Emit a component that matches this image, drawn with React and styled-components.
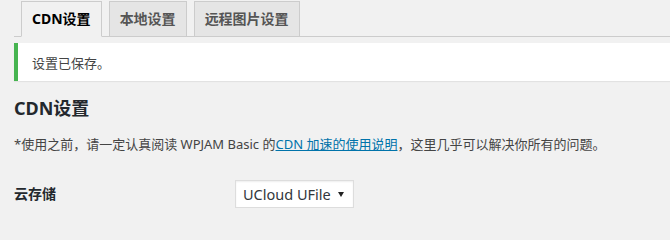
import styled, { createGlobalStyle } from 'styled-components';

const GlobalStyle = createGlobalStyle`
  html, body {
    margin: 0;
    padding: 0;
    background: #f1f1f1;
  }
  body {
    font-family: "Noto Sans", "Noto Sans CJK SC", sans-serif;
    color: #444;
    font-size: 13px;
  }
`;

const Wrap = styled.div`
  padding-left: 14px;
  width: 670px;
  height: 236px;
  box-sizing: border-box;
  overflow: hidden;
`;

const TabBar = styled.nav`
  display: flex;
  align-items: flex-end;
  gap: 7px;
  padding: 1px 0 0 7px;
  border-bottom: 1px solid #ccc;
`;

const Tab = styled.a`
  display: block;
  padding: 5px 10px;
  margin-bottom: -1px;
  font-size: 14px;
  line-height: 24px;
  font-weight: 700;
  text-decoration: none;
  border: 1px solid #ccc;
  border-bottom-color: ${props => (props.active ? '#f1f1f1' : '#ccc')};
  background: ${props => (props.active ? '#f1f1f1' : '#e5e5e5')};
  color: ${props => (props.active ? '#000' : '#555')};
`;

const Notice = styled.div`
  margin-top: 6px;
  height: 38px;
  display: flex;
  align-items: center;
  padding-left: 14px;
  background: #fff;
  border-left: 4px solid #46b450;
  box-shadow: 0 1px 1px rgba(0, 0, 0, 0.06);
  font-size: 13px;
  color: #444;
`;

const Title = styled.h2`
  margin: 15px 0 0;
  font-size: 18px;
  line-height: 24px;
  font-weight: 700;
  color: #23282d;
`;

const Intro = styled.p`
  margin: 14px 0 0;
  font-size: 13px;
  line-height: 20px;
  color: #444;
`;

const Link = styled.a`
  color: #0073aa;
  text-decoration: underline;
`;

const FormRow = styled.div`
  display: flex;
  align-items: center;
  margin-top: 26px;
  height: 28px;
`;

const Label = styled.label`
  width: 221px;
  padding-bottom: 2px;
  font-size: 14px;
  font-weight: 700;
  color: #23282d;
`;

const SelectBox = styled.div`
  display: flex;
  align-items: center;
  justify-content: space-between;
  box-sizing: border-box;
  width: 119px;
  height: 28px;
  padding: 0 9px 0 7px;
  background: #fff;
  border: 1px solid #ddd;
  box-shadow: inset 0 1px 2px rgba(0, 0, 0, 0.07);
  font-size: 14.5px;
  color: #32373c;
`;

const Caret = styled.span`
  width: 0;
  height: 0;
  border-left: 3px solid transparent;
  border-right: 3px solid transparent;
  border-top: 5px solid #222;
`;

const tabs = ['CDN设置', '本地设置', '远程图片设置'];

const App = () => {
  return (
    <Wrap>
      <GlobalStyle />
      <TabBar>
        {tabs.map((tab, i) => (
          <Tab key={tab} active={i === 0}>{tab}</Tab>
        ))}
      </TabBar>
      <Notice>设置已保存。</Notice>
      <Title>CDN设置</Title>
      <Intro>
        *使用之前，请一定认真阅读 WPJAM Basic 的<Link href="#">CDN 加速的使用说明</Link>，这里几乎可以解决你所有的问题。
      </Intro>
      <FormRow>
        <Label>云存储</Label>
        <SelectBox>
          <span>UCloud UFile</span>
          <Caret />
        </SelectBox>
      </FormRow>
    </Wrap>
  );
};

export default App;
